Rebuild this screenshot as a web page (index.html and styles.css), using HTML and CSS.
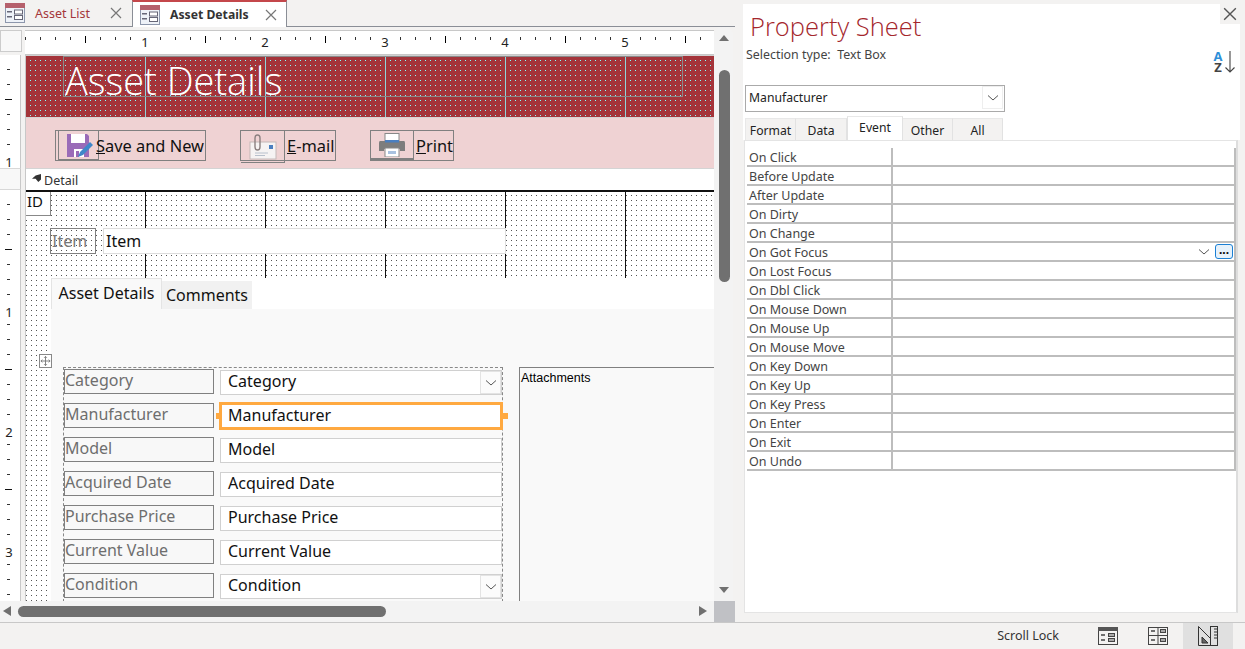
FILE: index.html
```html
<!DOCTYPE html>
<html lang="en">
<head>
    <meta charset="UTF-8">
    <meta name="viewport" content="width=device-width, initial-scale=1.0">
    <title>Asset Details - Design View</title>
    <link rel="stylesheet" href="styles.css">
</head>
<body>
    <svg class="svg-defs" width="0" height="0">
        <symbol id="form-icon" viewBox="0 0 20 20">
            <rect x="0.5" y="0.5" width="19" height="19" fill="#eef2f8" stroke="#8d97ac"/>
            <rect x="0" y="0" width="20" height="5" fill="#b5606c"/>
            <rect x="2" y="8" width="5" height="1.5" fill="#667"/>
            <rect x="2" y="13" width="5" height="1.5" fill="#667"/>
            <rect x="9.5" y="7" width="8" height="4" fill="#fff" stroke="#667"/>
            <rect x="9.5" y="12.5" width="8" height="4" fill="#fff" stroke="#667"/>
        </symbol>
        <symbol id="chevron" viewBox="0 0 12 8">
            <path d="M1 1.5 L6 6 L11 1.5" fill="none" stroke="#555" stroke-width="1"/>
        </symbol>
        <symbol id="close-x" viewBox="0 0 12 12">
            <path d="M1 1 L11 11 M11 1 L1 11" fill="none" stroke="currentColor" stroke-width="1.2"/>
        </symbol>
    </svg>

    <div class="app">
        <main class="designer">
            <div class="doc-tabs">
                <div class="doc-tab">
                    <svg class="doc-icon"><use href="#form-icon"/></svg>
                    <span class="doc-name">Asset List</span>
                    <svg class="doc-x"><use href="#close-x"/></svg>
                </div>
                <div class="doc-tab active">
                    <svg class="doc-icon"><use href="#form-icon"/></svg>
                    <span class="doc-name">Asset Details</span>
                    <svg class="doc-x"><use href="#close-x"/></svg>
                </div>
            </div>

            <div class="work-row">
                <div class="work-left">
                    <div class="ruler-row">
                        <div class="ruler-corner"></div>
                        <div class="ruler-top">
                            <span>1</span><span>2</span><span>3</span><span>4</span><span>5</span>
                        </div>
                    </div>
                    <div class="design-body">
                        <div class="ruler-left">
                            <div class="rl-header"><span>1</span></div>
                            <div class="rl-bar"></div>
                            <div class="rl-detail"><span>1</span><span>2</span><span>3</span></div>
                        </div>
                        <div class="canvas">
                            <section class="form-title">Asset Details</section>
                            <section class="form-buttons">
                                <div class="cmd-btn save-btn">
                                    <span class="cmd-icon">
                                        <svg width="26" height="25" viewBox="0 0 26 25">
                                            <path d="M0 1 H20 L22 3 V24 H0 Z" fill="#9a6bb8"/>
                                            <rect x="4" y="1" width="14" height="9" fill="#fff"/>
                                            <rect x="7" y="16" width="10" height="8" fill="#fff"/>
                                            <rect x="9" y="18" width="3" height="6" fill="#9a6bb8"/>
                                            <path d="M11 24 L13 19 L23 9 L26 12 L16 22 Z" fill="#3f87c9"/>
                                        </svg>
                                    </span>
                                    <span class="cmd-label"><u>S</u>ave and New</span>
                                </div>
                                <div class="cmd-btn mail-btn">
                                    <span class="cmd-icon">
                                        <svg width="28" height="26" viewBox="0 0 28 26">
                                            <rect x="1" y="8" width="26" height="17" fill="#f6f3f3" stroke="#c4b8b8"/>
                                            <rect x="20" y="11" width="4" height="4" fill="#4a7fc0"/>
                                            <path d="M6 19 H19 M6 21.5 H16" stroke="#b8c0cc" stroke-width="1"/>
                                            <path d="M6 6 V13 Q6 16 8.5 16 Q11 16 11 13 V4 Q11 1 8.5 1 Q6 1 6 4 V11" fill="none" stroke="#8b8080" stroke-width="1.4"/>
                                        </svg>
                                    </span>
                                    <span class="cmd-label"><u>E</u>-mail</span>
                                </div>
                                <div class="cmd-btn print-btn">
                                    <span class="cmd-icon">
                                        <svg width="28" height="24" viewBox="0 0 28 24">
                                            <rect x="7" y="0.5" width="14" height="8" fill="#fff" stroke="#888"/>
                                            <path d="M2 8 H26 Q27 8 27 10 V18 H22 V16 H6 V18 H1 V10 Q1 8 2 8 Z" fill="#7d7d7d"/>
                                            <rect x="7" y="7" width="14" height="2.5" fill="#4a7fc0"/>
                                            <rect x="7" y="15" width="14" height="9" fill="#fff" stroke="#888"/>
                                            <rect x="10" y="18" width="8" height="3" fill="#a9c2e0"/>
                                        </svg>
                                    </span>
                                    <span class="cmd-label"><u>P</u>rint</span>
                                </div>
                            </section>
                            <div class="section-bar"><span class="bar-arrow"></span>Detail</div>
                            <section class="detail">
                                <div class="ctl id-label">ID</div>
                                <div class="ctl item-label">Item</div>
                                <div class="ctl item-box">Item</div>
                                <div class="move-handle">
                                    <svg width="12" height="12" viewBox="0 0 12 12">
                                        <path d="M6 1 V11 M1 6 H11 M4.5 2.5 L6 1 L7.5 2.5 M4.5 9.5 L6 11 L7.5 9.5 M2.5 4.5 L1 6 L2.5 7.5 M9.5 4.5 L11 6 L9.5 7.5" fill="none" stroke="#777" stroke-width="1"/>
                                    </svg>
                                </div>

                                <div class="tab-control">
                                    <div class="page-tabs">
                                        <div class="page-tab active">Asset Details</div>
                                        <div class="page-tab">Comments</div>
                                    </div>
                                    <div class="page-body">
                                        <div class="field-group">
                                            <div class="fld-label">Category</div>
                                            <div class="fld-box has-arrow">Category<span class="fld-arrow"><svg width="12" height="8"><use href="#chevron"/></svg></span></div>
                                            <div class="fld-label">Manufacturer</div>
                                            <div class="fld-box selected">Manufacturer</div>
                                            <div class="fld-label">Model</div>
                                            <div class="fld-box">Model</div>
                                            <div class="fld-label">Acquired Date</div>
                                            <div class="fld-box">Acquired Date</div>
                                            <div class="fld-label">Purchase Price</div>
                                            <div class="fld-box">Purchase Price</div>
                                            <div class="fld-label">Current Value</div>
                                            <div class="fld-box">Current Value</div>
                                            <div class="fld-label">Condition</div>
                                            <div class="fld-box has-arrow">Condition<span class="fld-arrow"><svg width="12" height="8"><use href="#chevron"/></svg></span></div>
                                        </div>
                                        <div class="attachments">Attachments</div>
                                    </div>
                                </div>
                            </section>
                        </div>
                    </div>
                </div>
                <div class="vscroll">
                    <span class="arrow-up"></span>
                    <span class="v-thumb"></span>
                    <span class="arrow-down"></span>
                </div>
            </div>

            <div class="hscroll-row">
                <div class="hscroll">
                    <span class="arrow-left"></span>
                    <span class="h-thumb"></span>
                    <span class="arrow-right"></span>
                </div>
                <div class="scroll-corner"></div>
            </div>
        </main>

        <aside class="prop-sheet">
            <div class="prop-top">
                <div class="prop-head">
                    <h1>Property Sheet</h1>
                    <div class="prop-close"><svg width="14" height="14"><use href="#close-x"/></svg></div>
                </div>
                <div class="sel-row">
                    <span>Selection type:&nbsp; Text Box</span>
                    <span class="sort-icon">
                        <span class="sort-az"><b class="sort-a">A</b><b class="sort-z">Z</b></span>
                        <svg width="10" height="22" viewBox="0 0 10 22">
                            <path d="M5 0 V21 M0.5 16.5 L5 21 L9.5 16.5" fill="none" stroke="#444" stroke-width="1.1"/>
                        </svg>
                    </span>
                </div>
                <div class="prop-combo">
                    <span>Manufacturer</span>
                    <span class="combo-arrow"><svg width="12" height="8"><use href="#chevron"/></svg></span>
                </div>
                <div class="prop-tabs">
                    <div class="prop-tab t-format">Format</div>
                    <div class="prop-tab t-data">Data</div>
                    <div class="prop-tab t-event active">Event</div>
                    <div class="prop-tab t-other">Other</div>
                    <div class="prop-tab t-all">All</div>
                </div>
            </div>
            <div class="prop-body">
                <div class="prop-row"><div class="p-name">On Click</div><div class="p-val"></div></div>
                <div class="prop-row"><div class="p-name">Before Update</div><div class="p-val"></div></div>
                <div class="prop-row"><div class="p-name">After Update</div><div class="p-val"></div></div>
                <div class="prop-row"><div class="p-name">On Dirty</div><div class="p-val"></div></div>
                <div class="prop-row"><div class="p-name">On Change</div><div class="p-val"></div></div>
                <div class="prop-row"><div class="p-name">On Got Focus</div><div class="p-val focus">
                    <span class="val-arrow"><svg width="12" height="8"><use href="#chevron"/></svg></span>
                    <span class="build-btn">...</span>
                </div></div>
                <div class="prop-row"><div class="p-name">On Lost Focus</div><div class="p-val"></div></div>
                <div class="prop-row"><div class="p-name">On Dbl Click</div><div class="p-val"></div></div>
                <div class="prop-row"><div class="p-name">On Mouse Down</div><div class="p-val"></div></div>
                <div class="prop-row"><div class="p-name">On Mouse Up</div><div class="p-val"></div></div>
                <div class="prop-row"><div class="p-name">On Mouse Move</div><div class="p-val"></div></div>
                <div class="prop-row"><div class="p-name">On Key Down</div><div class="p-val"></div></div>
                <div class="prop-row"><div class="p-name">On Key Up</div><div class="p-val"></div></div>
                <div class="prop-row"><div class="p-name">On Key Press</div><div class="p-val"></div></div>
                <div class="prop-row"><div class="p-name">On Enter</div><div class="p-val"></div></div>
                <div class="prop-row"><div class="p-name">On Exit</div><div class="p-val"></div></div>
                <div class="prop-row"><div class="p-name">On Undo</div><div class="p-val"></div></div>
            </div>
        </aside>
    </div>

    <footer class="status-bar">
        <span class="status-text">Scroll Lock</span>
        <span class="view-btn">
            <svg width="20" height="18" viewBox="0 0 20 18">
                <rect x="0.5" y="0.5" width="19" height="17" fill="#f3f2f1" stroke="#444"/>
                <rect x="0" y="0" width="20" height="4" fill="#555"/>
                <path d="M3 8 H7 M3 13 H7" stroke="#444" stroke-width="1.5"/>
                <rect x="10.5" y="6.5" width="6" height="3" fill="#aaa" stroke="#444"/>
                <rect x="10.5" y="11.5" width="6" height="3" fill="#aaa" stroke="#444"/>
            </svg>
        </span>
        <span class="view-btn">
            <svg width="20" height="18" viewBox="0 0 20 18">
                <rect x="0.5" y="0.5" width="19" height="17" fill="#f3f2f1" stroke="#444"/>
                <path d="M0 8.5 H20 M10 0 V18" stroke="#444"/>
                <path d="M3 4 H7 M3 13 H7" stroke="#444" stroke-width="1.5"/>
                <rect x="12.5" y="2.5" width="5" height="3" fill="#aaa" stroke="#444"/>
                <rect x="12.5" y="11.5" width="5" height="3" fill="#aaa" stroke="#444"/>
            </svg>
        </span>
        <span class="view-btn current">
            <svg width="20" height="20" viewBox="0 0 20 20">
                <path d="M0.5 0.5 L19.5 19.5 H0.5 Z" fill="#e0e0e0" stroke="#333"/>
                <path d="M4 11 L10 17 H4 Z" fill="#666" stroke="#333"/>
                <rect x="12.5" y="0.5" width="7" height="19" fill="#e0e0e0" stroke="#333"/>
                <path d="M16 3 H19 M16 6 H19 M16 9 H19 M16 12 H19" stroke="#333"/>
            </svg>
        </span>
    </footer>
</body>
</html>
```

FILE: styles.css
```css
* {
    box-sizing: border-box;
}
body {
    margin: 0;
    width: 1245px;
    height: 649px;
    overflow: hidden;
    background-color: #f3f2f1;
    font-family: "Noto Sans", "Open Sans", sans-serif;
    color: #000;
}
.svg-defs {
    position: absolute;
}
.app {
    display: flex;
    height: 622px;
}

/* left side: form designer */
.designer {
    width: 735px;
    display: flex;
    flex-direction: column;
}
.doc-tabs {
    height: 27px;
    display: flex;
    border-bottom: 1px solid #8a8e96;
    flex-shrink: 0;
}
.doc-tab {
    display: flex;
    align-items: center;
    height: 26px;
    width: 132px;
    padding-left: 5px;
    font-size: 12.5px;
    color: #a4373a;
}
.doc-tab.active {
    width: 155px;
    height: 27px;
    padding-left: 7px;
    background-color: #fff;
    border-top: 2px solid #c4474b;
    border-left: 1px solid #8a8e96;
    border-right: 1px solid #8a8e96;
    color: #333;
    font-size: 12.2px;
    font-weight: 700;
}
.doc-icon {
    width: 20px;
    height: 20px;
    flex-shrink: 0;
}
.doc-name {
    margin-left: 10px;
    width: 75px;
    white-space: nowrap;
}
.doc-tab.active .doc-name {
    width: 95px;
}
.doc-x {
    width: 12px;
    height: 12px;
    color: #777;
}
.work-row {
    display: flex;
    height: 574px;
}
.work-left {
    width: 714px;
    display: flex;
    flex-direction: column;
    background-color: #fff;
}
.ruler-row {
    height: 28px;
    display: flex;
    background-color: #f3f2f1;
}
.ruler-corner {
    width: 22px;
    height: 22px;
    margin-top: 3px;
    background-color: #f8f8f8;
    border: 1px solid #ccc;
}
.ruler-top {
    margin-left: 3px;
    margin-top: 3px;
    flex: 1;
    height: 25px;
    display: flex;
    gap: 108px;
    padding-left: 114px;
    background-color: #fff;
    border-top: 1px solid #c8c8c8;
    border-bottom: 1px solid #c8c8c8;
    background-image:
        linear-gradient(to right, #000 1px, transparent 1px),
        linear-gradient(to right, #333 1px, transparent 1px);
    background-size: 120px 7px, 15px 3px;
    background-position: 60px 5px, 0 6px;
    background-repeat: repeat-x;
}
.ruler-top span {
    width: 12px;
    background-color: #fff;
    height: 20px;
    margin-top: 3px;
    text-align: center;
    font-size: 13px;
    line-height: 16px;
    color: #222;
}
.design-body {
    flex: 1;
    display: flex;
    min-height: 0;
    overflow: hidden;
}
.ruler-left {
    width: 26px;
    background-color: #fff;
    border-right: 1px solid #c8c8c8;
    box-shadow: inset -4px 0 0 #f3f2f1;
    flex-shrink: 0;
    display: flex;
    flex-direction: column;
    overflow: hidden;
}
.rl-header, .rl-detail {
    margin-right: 4px;
    border-right: 1px solid #c8c8c8;
    background-image:
        linear-gradient(#111 1px, transparent 1px),
        linear-gradient(#333 1px, transparent 1px);
    background-repeat: repeat-y;
    text-align: center;
    font-size: 13px;
    line-height: 16px;
}
.rl-header {
    height: 113px;
    flex-shrink: 0;
    background-size: 7px 60px, 3px 15px;
    background-position: 5px 44px, 7px 14px;
    padding-top: 99px;
}
.rl-header span, .rl-detail span {
    display: block;
    background-color: #fff;
    height: 14px;
    color: #222;
    padding-right: 2px;
}
.rl-bar {
    height: 22px;
    flex-shrink: 0;
    margin-right: 4px;
    border-right: 1px solid #c8c8c8;
    border-top: 1px solid #d8d8d8;
    border-bottom: 1px solid #d8d8d8;
    background-color: #f8f8f8;
}
.rl-detail {
    flex: 1;
    min-height: 0;
    background-size: 7px 120px, 3px 15px;
    background-position: 5px 59px, 7px 14px;
    padding-top: 114px;
}
.rl-detail span {
    margin-bottom: 106px;
}

/* form sections */
.canvas {
    flex: 1;
    display: flex;
    flex-direction: column;
    background-color: #fff;
    overflow: hidden;
    border-top: 1px solid #d0d0d0;
}
.form-title {
    position: relative;
    height: 61px;
    padding-left: 39px;
    background-color: #a4343a;
    background-image:
        linear-gradient(to right, #8fd3da 1px, transparent 1px),
        conic-gradient(at 1px 1px, transparent 75%, #8ff 0);
    background-size: 120px 100%, 5px 5px;
    background-position: 119px 0, 4px 4px;
    flex-shrink: 0;
    color: #fff;
    font-family: "Open Sans", sans-serif;
    font-weight: 300;
    font-size: 38px;
    line-height: 48px;
    white-space: nowrap;
}
/* outline of the title control */
.form-title::before {
    content: "";
    position: absolute;
    left: 37px;
    top: 0;
    width: 618px;
    height: 39px;
    border: 1px solid #8a8a8a;
}
.form-buttons {
    height: 52px;
    background-color: #efd2d3;
    border-top: 1px solid #d4d4d4;
    border-bottom: 1px solid #d4d4d4;
    display: flex;
    align-items: flex-start;
    padding: 12px 0 0 29px;
    flex-shrink: 0;
}
.cmd-btn {
    display: flex;
    align-items: stretch;
    height: 31px;
    border: 1px solid #808080;
    font-size: 16.4px;
    line-height: 29px;
    white-space: nowrap;
    color: #111;
}
.cmd-icon {
    display: flex;
    align-items: center;
    justify-content: center;
    border-right: 1px solid #808080;
    border-bottom: 1px solid #808080;
}
.save-btn {
    width: 151px;
}
.save-btn .cmd-icon {
    width: 41px;
    margin-left: 2px;
    border-left: 1px solid #808080;
    margin-right: -3px;
}
.save-btn .cmd-icon svg {
    margin-left: 3px;
}
.mail-btn {
    width: 96px;
    margin-left: 34px;
}
.mail-btn .cmd-icon {
    width: 44px;
    margin-right: 2px;
    height: 32px;
}
.print-btn {
    width: 84px;
    margin-left: 34px;
}
.print-btn .cmd-icon {
    width: 44px;
    margin-right: 2px;
    border-bottom-width: 2px;
}
.section-bar {
    height: 22px;
    font-size: 12.5px;
    line-height: 23px;
    padding-left: 18px;
    color: #333;
    position: relative;
    flex-shrink: 0;
}
.bar-arrow {
    position: absolute;
    left: 6px;
    top: 5px;
    width: 9px;
    height: 8px;
    background-color: #333;
    clip-path: polygon(100% 0, 100% 70%, 70% 100%, 40% 60%, 0 60%, 40% 20%);
}
.detail {
    position: relative;
    flex: 1;
    border-top: 2px solid #111;
    margin-top: -1px;
    background-image:
        linear-gradient(to right, #111 1px, transparent 1px),
        conic-gradient(at 1px 1px, transparent 75%, #555 0);
    background-size: 120px 100%, 5px 5px;
    background-position: 119px 0, 0 3px;
}
.ctl {
    position: absolute;
    height: 26px;
    font-size: 16px;
    line-height: 24px;
    white-space: nowrap;
}
.id-label {
    left: 0;
    top: 0;
    width: 25px;
    height: 24px;
    background-color: #fff;
    border-right: 1px solid #888;
    border-bottom: 1px solid #888;
    font-size: 15px;
    line-height: 18px;
    padding-left: 1px;
    color: #111;
}
.item-label {
    left: 24px;
    top: 36px;
    width: 46px;
    border: 1px solid #808080;
    color: #777;
    padding-left: 1px;
}
.item-box {
    left: 77px;
    top: 36px;
    width: 403px;
    background-color: #fff;
    border: 1px solid #ddd;
    padding-left: 2px;
    color: #111;
}
.move-handle {
    position: absolute;
    left: 13px;
    top: 162px;
    width: 13px;
    height: 14px;
    background-color: #fff;
    border: 1px solid #888;
    z-index: 2;
    display: flex;
    align-items: center;
    justify-content: center;
}
.tab-control {
    position: absolute;
    left: 25px;
    top: 86px;
    right: 0;
    bottom: 0;
    display: flex;
    flex-direction: column;
    background-color: #fff;
}
.page-tabs {
    display: flex;
    align-items: flex-end;
    height: 31px;
    flex-shrink: 0;
    background-color: #fff;
}
.page-tab {
    height: 28px;
    width: 90px;
    font-size: 16px;
    line-height: 29px;
    text-align: center;
    white-space: nowrap;
    color: #111;
    background-color: #f1f1f1;
}
.page-tab.active {
    height: 31px;
    width: 111px;
    line-height: 28px;
    background-color: #f9f9f9;
    border-top: 1px solid #e4e4e4;
    border-right: 1px solid #e4e4e4;
    border-left: 1px solid #e4e4e4;
}
.page-body {
    flex: 1;
    display: flex;
    align-items: flex-start;
    background-color: #f9f9f9;
    padding: 58px 0 0 12px;
}
.field-group {
    display: grid;
    grid-template-columns: 150px 282px;
    grid-auto-rows: 24px;
    row-gap: 10px;
    column-gap: 6px;
    width: 440px;
    padding-top: 1px;
    border-top: 1px dashed #888;
    border-left: 1px dashed #888;
    border-right: 1px dashed #888;
    height: 240px;
}
.fld-label {
    height: 25px;
    border: 1px solid #808080;
    font-size: 16px;
    line-height: 20px;
    color: #6e6e6e;
    white-space: nowrap;
    background-color: #f8f8f8;
}
.fld-box {
    position: relative;
    height: 25px;
    margin-top: 1px;
    background-color: #fff;
    border: 1px solid #d0d0d0;
    font-size: 16px;
    line-height: 20px;
    padding-left: 7px;
    white-space: nowrap;
    color: #111;
}
.fld-box.selected {
    border: 3px solid #ffa940;
    margin: -1px -1px 0 -1px;
    height: 28px;
    line-height: 21px;
    padding-left: 6px;
}
.fld-box.selected::before,
.fld-box.selected::after {
    content: "";
    position: absolute;
    top: 8px;
    width: 6px;
    height: 6px;
    background-color: #ffa940;
}
.fld-box.selected::before {
    left: -6px;
}
.fld-box.selected::after {
    right: -8px;
}
.fld-arrow {
    position: absolute;
    top: 0;
    right: 0;
    bottom: 0;
    width: 21px;
    display: flex;
    align-items: center;
    justify-content: center;
    background-color: #fbfbfb;
    border: 1px solid #e3e3e3;
}
.attachments {
    margin-left: 16px;
    flex: 1;
    height: 240px;
    border-left: 1px solid #808080;
    border-top: 1px solid #808080;
    font-family: "Liberation Sans", Arial, sans-serif;
    font-size: 12.5px;
    line-height: 17px;
    padding: 2px 0 0 1px;
}

/* scrollbars */
.vscroll {
    width: 19px;
    height: 574px;
    background-color: #f3f3f3;
    position: relative;
    border-radius: 8px 8px 0 0;
}
.v-thumb {
    position: absolute;
    left: 5px;
    top: 43px;
    width: 11px;
    height: 212px;
    background-color: #707070;
    border-radius: 6px;
}
.arrow-up, .arrow-down {
    position: absolute;
    left: 5px;
    width: 0;
    height: 0;
    border-left: 5px solid transparent;
    border-right: 5px solid transparent;
}
.arrow-up {
    top: 8px;
    border-bottom: 6px solid #707070;
}
.arrow-down {
    bottom: 8px;
    border-top: 6px solid #707070;
}
.hscroll-row {
    display: flex;
    height: 21px;
}
.hscroll {
    width: 714px;
    background-color: #f3f3f3;
    position: relative;
}
.h-thumb {
    position: absolute;
    left: 18px;
    top: 5px;
    width: 368px;
    height: 11px;
    background-color: #707070;
    border-radius: 6px;
}
.arrow-left, .arrow-right {
    position: absolute;
    top: 5px;
    width: 0;
    height: 0;
    border-top: 5px solid transparent;
    border-bottom: 5px solid transparent;
}
.arrow-left {
    left: 3px;
    border-right: 8px solid #707070;
}
.arrow-right {
    left: 699px;
    border-left: 8px solid #707070;
}
.scroll-corner {
    width: 21px;
    background-color: #c0c1c5;
}

/* right side: property sheet */
.prop-sheet {
    margin-left: 8px;
    margin-top: 4px;
    width: 497px;
    height: 609px;
    display: flex;
    flex-direction: column;
}
.prop-top {
    background-color: #fff;
    flex-shrink: 0;
}
.prop-head {
    position: relative;
    height: 40px;
    padding-left: 7px;
}
.prop-head h1 {
    margin: 0;
    font-family: "Open Sans", sans-serif;
    font-weight: 300;
    font-size: 25.5px;
    line-height: 40px;
    padding-top: 2px;
    height: 40px;
    color: #a4262c;
    white-space: nowrap;
}
.prop-close {
    position: absolute;
    right: 0;
    top: 0;
    width: 20px;
    height: 20px;
    background-color: #f3f2f1;
    display: flex;
    align-items: center;
    justify-content: center;
    color: #555;
}
.sel-row {
    display: flex;
    justify-content: space-between;
    height: 41px;
    padding: 2px 4px 0 3px;
    font-size: 12.4px;
    line-height: 17px;
    color: #444;
}
.sort-icon {
    display: flex;
    align-items: flex-start;
    gap: 2px;
    margin-top: 5px;
    margin-right: 1px;
}
.sort-az {
    display: flex;
    flex-direction: column;
    width: 10px;
    text-align: center;
    font-family: "Open Sans", sans-serif;
    font-size: 13px;
    line-height: 11px;
}
.sort-a {
    color: #2e8fd8;
}
.sort-z {
    color: #444;
}
.prop-combo {
    display: flex;
    justify-content: space-between;
    align-items: center;
    width: 260px;
    height: 27px;
    margin-left: 2px;
    padding: 0 1px 2px 3px;
    border: 1px solid #aaa;
    font-size: 12.2px;
    color: #222;
}
.combo-arrow {
    width: 21px;
    height: 23px;
    display: flex;
    align-items: center;
    justify-content: center;
    border: 1px solid #eee;
}
.prop-tabs {
    display: flex;
    align-items: flex-end;
    height: 28px;
    margin-left: 2px;
}
.prop-tab {
    height: 22px;
    background-color: #f3f2f1;
    border-right: 1px solid #e2e2e2;
    border-top: 1px solid #e8e8e8;
    font-size: 12.2px;
    line-height: 23px;
    text-align: center;
    color: #222;
}
.t-format { width: 51px; border-left: 1px solid #e8e8e8; }
.t-data { width: 51px; }
.t-event {
    width: 56px;
    height: 24px;
    background-color: #fff;
    border-left: 1px solid #e2e2e2;
    position: relative;
    line-height: 21px;
}
.t-other { width: 50px; }
.t-all { width: 50px; }
.prop-body {
    flex: 1;
    width: 494px;
    padding: 7px 0 0 2px;
    background-color: #fff;
    border: 1px solid #e4e4e4;
    border-right: 2px solid #ddd;
    margin-left: 1px;
}
.prop-row {
    display: flex;
    height: 19px;
    border-bottom: 2px solid #bdbdbd;
}
.p-name {
    width: 146px;
    padding-left: 2px;
    font-size: 12.5px;
    line-height: 20px;
    color: #444;
    border-right: 2px solid #bdbdbd;
    white-space: nowrap;
}
.p-val {
    flex: 1;
    border-right: 2px solid #bdbdbd;
}
.p-val.focus {
    display: flex;
    justify-content: flex-end;
    align-items: center;
    gap: 1px;
    padding-right: 1px;
}
.val-arrow {
    width: 20px;
    height: 17px;
    display: flex;
    align-items: center;
    justify-content: center;
}
.build-btn {
    width: 18px;
    height: 15px;
    background-color: #e5f1fb;
    border: 1px solid #1a7fd4;
    border-radius: 3px;
    font-size: 12px;
    font-weight: 700;
    line-height: 9px;
    text-align: center;
}

/* status bar */
.status-bar {
    height: 27px;
    border-top: 1px solid #c8c8c8;
    display: flex;
    justify-content: flex-end;
    align-items: stretch;
    padding-right: 12px;
    font-size: 12.5px;
    color: #333;
}
.status-text {
    line-height: 26px;
    margin-right: 24px;
}
.view-btn {
    width: 50px;
    display: flex;
    align-items: center;
    justify-content: center;
}
.view-btn.current {
    background-color: #e0e0e0;
}
```
